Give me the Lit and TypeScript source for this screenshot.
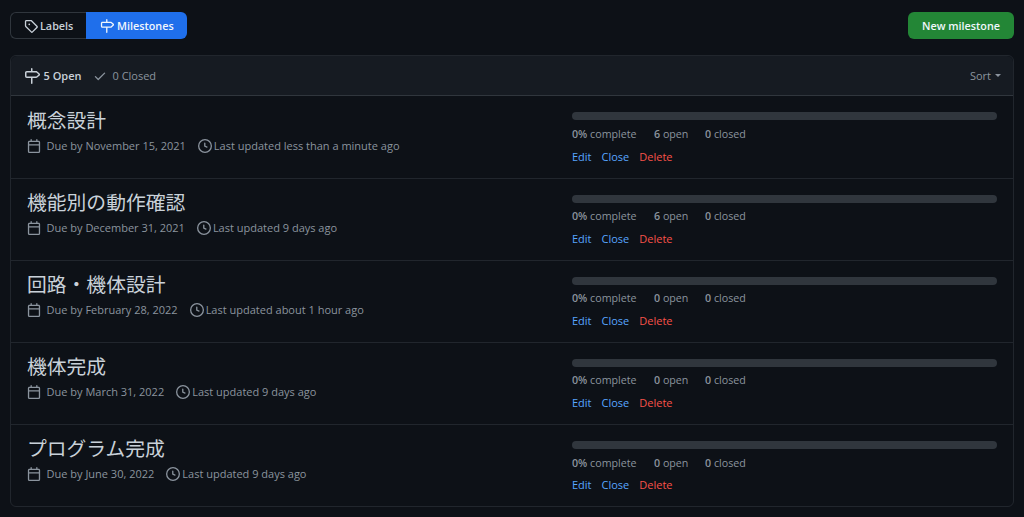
import { LitElement, html, css, svg } from "lit";
import { customElement } from "lit/decorators.js";

const milestonePath = "M7.75 0a.75.75 0 01.75.75V3h3.634c.414 0 .814.147 1.13.414l2.07 1.75a1.75 1.75 0 010 2.672l-2.07 1.75a1.75 1.75 0 01-1.13.414H8.5v5.25a.75.75 0 11-1.5 0V10H2.75A1.75 1.75 0 011 8.25v-3.5C1 3.784 1.784 3 2.75 3H7V.75A.75.75 0 017.75 0zm0 8.5h4.384a.25.25 0 00.161-.06l2.07-1.75a.25.25 0 000-.38l-2.07-1.75a.25.25 0 00-.161-.06H2.75a.25.25 0 00-.25.25v3.5c0 .138.112.25.25.25h5z";
const tagPath = "M2.5 7.775V2.75a.25.25 0 01.25-.25h5.025a.25.25 0 01.177.073l6.25 6.25a.25.25 0 010 .354l-5.025 5.025a.25.25 0 01-.354 0l-6.25-6.25a.25.25 0 01-.073-.177zm-1.5 0V2.75C1 1.784 1.784 1 2.75 1h5.025c.464 0 .91.184 1.238.513l6.25 6.25a1.75 1.75 0 010 2.474l-5.026 5.026a1.75 1.75 0 01-2.474 0l-6.25-6.25A1.75 1.75 0 011 7.775zM6 5a1 1 0 100 2 1 1 0 000-2z";
const checkPath = "M13.78 4.22a.75.75 0 010 1.06l-7.25 7.25a.75.75 0 01-1.06 0L2.22 9.28a.75.75 0 011.06-1.06L6 10.94l6.72-6.72a.75.75 0 011.06 0z";
const calPath = "M4.75 0a.75.75 0 01.75.75V2h5V.75a.75.75 0 011.5 0V2h1.25c.966 0 1.75.784 1.75 1.75v10.5A1.75 1.75 0 0113.25 16H2.75A1.75 1.75 0 011 14.25V3.75C1 2.784 1.784 2 2.75 2H4V.75A.75.75 0 014.75 0zm0 3.5h8.5a.25.25 0 01.25.25V6h-11V3.75a.25.25 0 01.25-.25h2zm-2.25 4v6.75c0 .138.112.25.25.25h10.5a.25.25 0 00.25-.25V7.5h-11z";
const clockPath = "M1.5 8a6.5 6.5 0 1113 0 6.5 6.5 0 01-13 0zM8 0a8 8 0 100 16A8 8 0 008 0zm.5 4.75a.75.75 0 00-1.5 0v3.5a.75.75 0 00.471.696l2.5 1a.75.75 0 00.557-1.392L8.5 7.742V4.75z";

const icon = (d: string, cls = "") => html`<svg class="ic ${cls}" viewBox="0 0 16 16" width="16" height="16" fill="currentColor">${svg`<path fill-rule="evenodd" d=${d}></path>`}</svg>`;

const rows = [
  { t: "概念設計", due: "November 15, 2021", upd: "less than a minute ago", open: 6 },
  { t: "機能別の動作確認", due: "December 31, 2021", upd: "9 days ago", open: 6 },
  { t: "回路・機体設計", due: "February 28, 2022", upd: "about 1 hour ago", open: 0 },
  { t: "機体完成", due: "March 31, 2022", upd: "9 days ago", open: 0 },
  { t: "プログラム完成", due: "June 30, 2022", upd: "9 days ago", open: 0 },
];

@customElement("app-root")
export class AppRoot extends LitElement {
  static styles = css`
    :host { display: block; height: 517px; overflow: hidden; background: #0d1117; color: #c9d1d9;
      font-family: "Open Sans", "Noto Sans CJK JP", sans-serif; font-size: 11px; line-height: 18px; padding: 12px 10px 0; box-sizing: border-box; }
    * { box-sizing: border-box; }
    .ic { display: block; flex: none; }
    .top { display: flex; justify-content: space-between; height: 27px; margin-bottom: 16px; }
    .tabs { display: flex; }
    .tab { display: flex; align-items: center; gap: 3px; height: 27px; font-weight: 600; font-size: 10.8px; color: #c9d1d9; }
    .tab .ic { width: 14px; height: 14px; }
    .labels { width: 76px; padding-left: 13px; gap: 2px; border: 1px solid #30363d; border-right: 0; border-radius: 6px 0 0 6px; }
    .miles { width: 101px; padding-left: 14px; background: #1f6feb; color: #f0f6fc; border-radius: 0 6px 6px 0; }
    .new { width: 106px; height: 27px; display: flex; align-items: center; justify-content: center; background: #238636; color: #f0f6fc; font-weight: 600; font-size: 10.8px; border-radius: 6px; }
    .box { border: 1px solid #21262d; border-radius: 6px; }
    .head { height: 40.4px; background: #161b22; border-bottom: 1px solid #30363d; border-radius: 6px 6px 0 0; display: flex; align-items: center; padding: 0 12px 0 12.5px; font-size: 11px; }
    .open { display: flex; align-items: center; gap: 4px; font-weight: 600; color: #c9d1d9; margin-right: 12px; }
    .closed { display: flex; align-items: center; gap: 5px; color: #8b949e; }
    .closed .ic { width: 14px; height: 14px; }
    .sort { margin-left: auto; color: #8b949e; display: flex; align-items: center; gap: 4px; }
    .caret { border: 3.5px solid transparent; border-top-color: #8b949e; border-bottom: 0; width: 0; height: 0; }
    .row { height: 82.2px; border-bottom: 1px solid #21262d; display: grid; grid-template-columns: 545px 425px; padding: 0 0 0 16px; }
    .row:last-child { border-bottom: 0; height: 81.2px; }
    .left { padding-top: 10.2px; }
    .title { font-size: 19.8px; line-height: 28px; color: #c9d1d9; font-weight: 400; }
    .meta { display: flex; align-items: center; color: #8b949e; margin-top: 2px; height: 18px; white-space: nowrap; }
    .meta .ic { width: 14px; height: 14px; }
    .due { margin-left: 5.5px; margin-right: 12px; }
    .upd { margin-left: 2px; }
    .right { padding-top: 16px; }
    .bar { height: 8px; border-radius: 6px; background: #30363d; }
    .stats { display: flex; margin-top: 4.4px; height: 18px; color: #8b949e; white-space: nowrap; font-size: 10.7px; }
    .stats b { font-weight: 600; }
    .s1 { width: 82px; } .s2 { width: 51px; }
    .acts { display: flex; gap: 10px; margin-top: 4.8px; height: 18px; font-size: 11px; }
    .e { color: #58a6ff; } .d { color: #f85149; }
  `;
  render() {
    return html`
      <div class="top">
        <div class="tabs">
          <div class="tab labels">${icon(tagPath)}Labels</div>
          <div class="tab miles">${icon(milestonePath)}Milestones</div>
        </div>
        <div class="new">New milestone</div>
      </div>
      <div class="box">
        <div class="head">
          <div class="open">${icon(milestonePath)}5 Open</div>
          <div class="closed">${icon(checkPath)}0 Closed</div>
          <div class="sort">Sort<span class="caret"></span></div>
        </div>
        ${rows.map(r => html`
          <div class="row">
            <div class="left">
              <div class="title">${r.t}</div>
              <div class="meta">${icon(calPath)}<span class="due">Due by ${r.due}</span>${icon(clockPath)}<span class="upd">Last updated ${r.upd}</span></div>
            </div>
            <div class="right">
              <div class="bar"></div>
              <div class="stats"><span class="s1"><b>0%</b> complete</span><span class="s2"><b>${r.open}</b> open</span><span><b>0</b> closed</span></div>
              <div class="acts"><span class="e">Edit</span><span class="e">Close</span><span class="d">Delete</span></div>
            </div>
          </div>`)}
      </div>`;
  }
}
